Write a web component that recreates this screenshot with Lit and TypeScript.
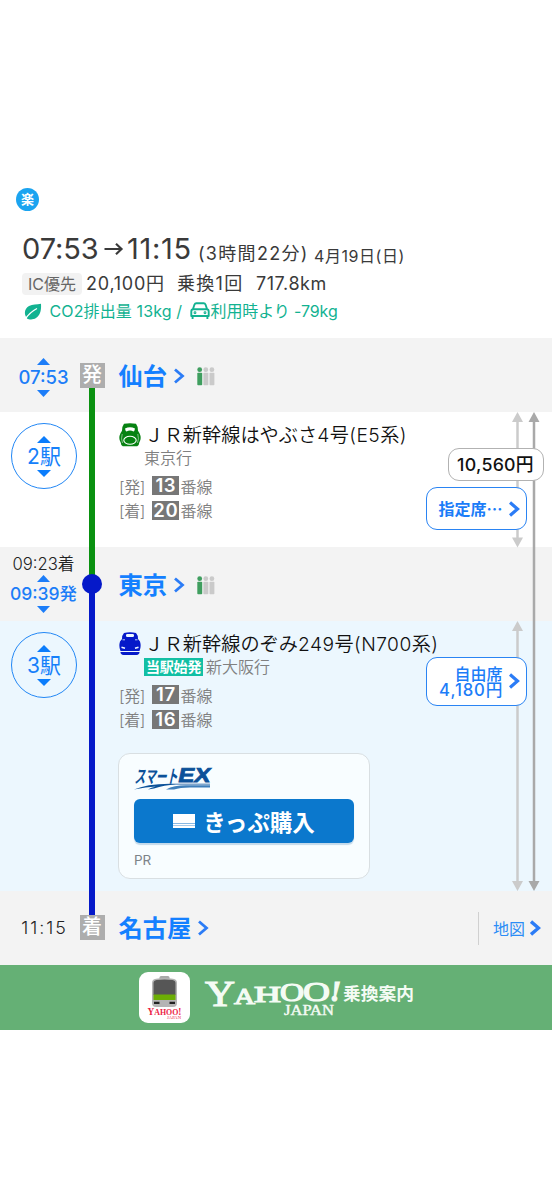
import { LitElement, html, svg, css, nothing } from "lit";
import { customElement, property } from "lit/decorators.js";

const FONT = css`Inter, "Noto Sans CJK JP", sans-serif`;

@customElement("chevron-icon")
class ChevronIcon extends LitElement {
  @property({ type: Number }) weight = 2.8;
  static styles = css`
    :host { display: inline-flex; }
    svg { display: block; }
    path { fill: none; stroke: #2b7cf6; }
  `;
  render() {
    return html`<svg width="11" height="16" viewBox="0 0 11 16">
      <path d="M1 1.5 L8.500 8 L1 14.5" stroke-width=${this.weight} />
    </svg>`;
  }
}

@customElement("trip-summary")
class TripSummary extends LitElement {
  static styles = css`
    :host {
      display: flex; flex-direction: column; align-items: flex-start;
      box-sizing: border-box; height: 338px; padding: 188px 0 0 16px;
      font-family: Inter, "Noto Sans CJK JP", sans-serif; color: #3a3a3a;
    }
    .easy {
      display: flex; align-items: center; justify-content: center;
      width: 23px; height: 23px; border-radius: 50%; background: #1ba4f0;
      color: #fff; font-size: 13px; font-weight: 700; line-height: 23px;
    }
    .line { display: flex; align-items: center; white-space: nowrap; }
    .time { margin: 20px 0 0 6px; height: 36px; line-height: 36px; }
    .clock { font-size: 29px; font-weight: 400; letter-spacing: -0.1px; width: 82px; }
    .clock.to { width: 71px; letter-spacing: 0.7px; }
    .arrow { width: 23px; height: 14px; flex: none; }
    .dur { font-size: 18px; padding-top: 9px; width: 116px; letter-spacing: 1.3px; }
    .date { font-size: 16px; padding-top: 14px; letter-spacing: 0.55px; }
    .fare { margin: 6px 0 0 6px; height: 22px; line-height: 22px; font-size: 18px; }
    .ic {
      width: 60px; height: 22px; border-radius: 4px; background: #f2f2f2; color: #666;
      font-size: 16px; text-align: center; margin-right: 4px;
    }
    .yen { width: 91px; letter-spacing: 0.75px; }
    .chg { width: 79px; letter-spacing: 1.3px; }
    .km { letter-spacing: 0.55px; }
    .eco { margin: 5px 0 0 8px; height: 22px; line-height: 22px; font-size: 16px; color: #12b291; }
    .leaf { width: 18px; height: 17px; margin-right: 7.500px; }
    .co { width: 140px; letter-spacing: 0.12px; }
    .car { width: 20px; height: 18px; margin-right: 1px; }
    .minus { letter-spacing: -0.1px; }
  `;
  render() {
    return html`
      <div class="easy">楽</div>
      <div class="line time">
        <span class="clock">07:53</span>
        <svg class="arrow" viewBox="0 0 23 14"><path d="M.5 7H17.500M12 1.800 17.500 7l-5.500 5.200" fill="none" stroke="#3a3a3a" stroke-width="2.200"/></svg>
        <span class="clock to">11:15</span>
        <span class="dur">(3時間22分)</span>
        <span class="date">4月19日(日)</span>
      </div>
      <div class="line fare">
        <span class="ic">IC優先</span><span class="yen">20,100円</span>
        <span class="chg">乗換1回</span><span class="km">717.8km</span>
      </div>
      <div class="line eco">
        <svg class="leaf" viewBox="0 0 18 17">
          <path d="M17 .8C17.400 7 16.500 12 12 15c-3 2-7 1.700-9 .4C-.5 11 .5 5.500 5 3 8.500 1.200 13 1.500 17 .8z" fill="#12b291"/>
          <path d="M.8 16.500C4 12 8 8 13 5.500" fill="none" stroke="#fff" stroke-width="1.300"/>
        </svg>
        <span class="co">CO2排出量 13kg /</span>
        <svg class="car" viewBox="0 0 20 18" fill="none" stroke="#12b291" stroke-width="1.900" stroke-linejoin="round">
          <path d="M2.800 7.500 4.500 2.500Q5 1.300 6.300 1.300H13.700Q15 1.300 15.500 2.500L17.200 7.500M1.300 14V9.500Q1.300 7.300 3.500 7.300H16.500Q18.700 7.300 18.700 9.500V14ZM2.600 14V17M17.400 14V17"/>
          <circle cx="5" cy="10.700" r=".5"/><circle cx="15" cy="10.700" r=".5"/>
        </svg>
        <span class="minus">利用時より -79kg</span>
      </div>`;
  }
}

@customElement("station-row")
class StationRow extends LitElement {
  @property() name = "";
  @property() kind = "";
  static styles = css`
    :host {
      display: grid; grid-template-columns: 79px 26px 1fr auto; height: 74px;
      background: #f3f3f3; font-family: ${FONT};
    }
    .times {
      display: flex; flex-direction: column; align-items: center; padding-left: 8px; box-sizing: border-box;
      height: 74px; justify-content: center; padding-top: 4px; white-space: nowrap;
    }
    .times.mid { justify-content: flex-start; padding-top: 6px; }
    .times.end { padding-top: 0; }
    .arr { font-size: 16.700px; line-height: 22px; color: #222; height: 22px; font-weight: 350; }
    .dep { font-size: 18.500px; line-height: 21px; height: 21px; color: #1c7df8; font-weight: 500; letter-spacing: 0; }
    .mid .dep { font-size: 17.500px; }
    .plain { font-size: 17.800px; line-height: 20px; color: #222; letter-spacing: 2px; font-weight: 350; text-indent: 2px; }
    .tri { width: 13px; height: 7px; display: block; fill: #1c7df8; margin: 2px 0; }
    .mid .tri { margin: 0; }
    .mid .dep { line-height: 24px; height: 24px; }
    .rail { display: flex; flex-direction: column; align-items: center; height: 74px; box-sizing: border-box; }
    .badge {
      width: 25px; height: 25px; background: #adadad; color: #fff; flex: none;
      font-size: 20px; line-height: 24px; text-align: center; font-weight: 500; overflow: hidden;
    }
    .rail.start { padding-top: 25px; }
    .g { background: #0a9110; width: 6px; flex: 1; }
    .b { background: #0519c9; width: 6px; flex: 1; }
    .dot { width: 20px; height: 20px; border-radius: 50%; background: #0519c9; margin: -10px 0; z-index: 1; flex: none; }
    .end .b { flex: none; height: 24px; }
    .name { display: flex; align-items: center; padding: 2px 0 0 13.500px; color: #1480ff; }
    .name.end { padding-top: 0; }
    .name b { font-size: 24.300px; font-weight: 700; line-height: 30px; margin-right: 7px; }
    .crowd { margin-left: 12px; width: 18px; height: 19px; }
    .map {
      align-self: center; display: flex; align-items: center; height: 33px; gap: 5px; width: 59px;
      border-left: 1px solid #d0d0d0; padding: 0 0 0 14px; font-size: 16px; color: #2b8cf6; 
    }
  `;
  times() {
    const up = html`<svg class="tri" viewBox="0 0 13 7"><path d="M0 7 6.500 0 13 7z"/></svg>`;
    const down = html`<svg class="tri" viewBox="0 0 13 7"><path d="M0 0 6.500 7 13 0z"/></svg>`;
    if (this.kind === "start") return html`${up}<span class="dep">07:53</span>${down}`;
    if (this.kind === "mid")
      return html`<span class="arr">09:23着</span>${up}<span class="dep">09:39発</span>${down}`;
    return html`<span class="plain">11:15</span>`;
  }
  rail() {
    if (this.kind === "start") return html`<span class="badge">発</span><i class="g"></i>`;
    if (this.kind === "mid") return html`<i class="g"></i><i class="dot"></i><i class="b"></i>`;
    return html`<i class="b"></i><span class="badge">着</span>`;
  }
  render() {
    return html`
      <div class="times ${this.kind}">${this.times()}</div>
      <div class="rail ${this.kind}">${this.rail()}</div>
      <div class="name ${this.kind}">
        <b>${this.name}</b><chevron-icon></chevron-icon>
        ${this.kind === "end" ? nothing : html`<svg class="crowd" viewBox="0 0 18 19">
          ${[0, 1, 2].map((i) => svg`<g fill=${i ? "#cacaca" : "#3f9e5f"}>
            <circle cx=${2.7 + i * 6.1} cy="2.700" r="2.400"/><rect x=${0.3 + i * 6.1} y="5.800" width="4.900" height="12.500" rx="0.800"/></g>`)}
        </svg>`}
      </div>
      ${this.kind === "end" ? html`<div class="map">地図<chevron-icon weight="3.4"></chevron-icon></div>` : nothing}`;
  }
}

@customElement("ride-row")
class RideRow extends LitElement {
  @property() color = "";
  @property() stops = "";
  @property() title = "";
  @property() bound = "";
  @property() from = "";
  @property() to = "";
  @property({ type: Boolean }) origin = false;
  static styles = css`
    :host { display: grid; grid-template-columns: 88px 8px 1fr; font-family: ${FONT}; }
    .stops {
      display: flex; flex-direction: column; align-items: center; justify-content: center; box-sizing: border-box;
      width: 66px; height: 66px; border: 1.500px solid #2287f5; border-radius: 50%;
      margin: 11px 0 0 11px; color: #1580fa; font-size: 21px; line-height: 27px; font-weight: 400;
    }
    .stops svg { width: 14px; height: 7px; fill: #0b7dfc; display: block; }
    .rail { width: 6px; margin-left: 1px; background: #0a9110; }
    .blue { background: #0519c9; }
    .body { padding: 11px 0 0 23px; white-space: nowrap; color: #808080; font-size: 16px; font-weight: 350; }
    .head { display: flex; height: 25px; line-height: 25px; font-size: 19.200px; color: #111; }
    .train { width: 22px; height: 24px; margin-right: 3.500px; flex: none; }
    .lat { letter-spacing: 0.45px; }
    .bound { display: flex; align-items: center; height: 20px; line-height: 20px; margin-left: 25px; gap: 3px; }
    .tag { background: #12bfa4; color: #fff; font-weight: 700; font-size: 14px; line-height: 18px; height: 18px; padding: 0 2px; width: 55px; text-align: center; letter-spacing: -0.2px; }
    .track { display: flex; align-items: center; height: 24.500px; }
    .mark { width: 26px; letter-spacing: -0.4px; }
    .track:nth-of-type(3) { margin-top: 5.500px; }
    .no {
      background: #777; color: #fff; font-weight: 600; font-size: 18.500px; width: 27px; height: 19px; line-height: 19.500px;
      text-align: center; margin: 0 1.500px 0 7px; letter-spacing: 0.6px; text-indent: 0.6px;
    }
  `;
  train() {
    return this.origin
      ? html`<svg class="train" viewBox="0 0 22 24">
          <path d="M5 1Q11-.5 17 1q2 2 2 6l2 2.500q1.500 5-.5 9.500H1.500q-2-4.500-.5-9.500L3 7Q3 3 5 1z" fill="#0519c9"/>
          <rect x="7" y="2" width="8" height="3" rx="1.200" fill="#eef8ff"/>
          <path d="M3.500 7.800h2.500M16 7.800h2.500" stroke="#eef8ff" stroke-width=".8"/>
          <path d="M2.500 15.300l3.500 1M19.500 15.300l-3.500 1" stroke="#eef8ff" stroke-width="1.600"/>
          <path d="M1 19h20v1H1z" fill="#eef8ff"/>
          <path d="M1.500 20h19q0 2.500-3 3h-13q-3-.5-3-3z" fill="#0519c9"/></svg>`
      : html`<svg class="train" viewBox="0 0 22 24">
          <path d="M5 .8Q11-.5 17 .8q2 2.500 2 7l1.500 2.500q2.500 5-.3 9.500-.2 3.200-2 3.500H3.800q-1.800-.3-2-3.500-2.800-4.500-.3-9.500L3 7.800q0-4.500 2-7z" fill="#078212"/>
          <path d="M6 5.500Q11 3.200 16 5.500 15.500 8.300 14.500 8.600 11 6.500 7.500 8.600 6.500 8.300 6 5.500z" fill="#fff"/>
          <path d="M3.200 11Q1.800 16 3.500 20M18.800 11Q20.200 16 18.500 20" fill="none" stroke="#fff" stroke-width=".5"/>
          <ellipse cx="11" cy="17.300" rx="6.200" ry="4" fill="none" stroke="#fff" stroke-width="1.100"/></svg>`;
  }
  render() {
    const cut = this.title.search(/[0-9]/);
    return html`
      <div class="stops">
        <svg viewBox="0 0 14 7"><path d="M0 7 7 0 14 7z"/></svg>
        <span>${this.stops}</span>
        <svg viewBox="0 0 14 7"><path d="M0 0 7 7 14 0z"/></svg>
      </div>
      <div class="rail ${this.color}"></div>
      <div class="body">
        <div class="head">${this.train()}<span>${this.title.slice(0, cut)}</span><span class="lat">${this.title.slice(cut)}</span></div>
        <div class="bound">${this.origin ? html`<span class="tag">当駅始発</span>` : nothing}<span>${this.bound}</span></div>
        <div class="track"><span class="mark">[発]</span><span class="no">${this.from}</span>番線</div>
        <div class="track"><span class="mark">[着]</span><span class="no">${this.to}</span>番線</div>
        <slot></slot>
      </div>`;
  }
}

@customElement("ticket-card")
class TicketCard extends LitElement {
  static styles = css`
    :host {
      display: flex; flex-direction: column; align-items: flex-start; box-sizing: border-box;
      width: 252px; height: 126px; margin: 21.500px 0 0 -1px; padding: 11px 15px 0; border: 1.500px solid #d9dfe2; border-radius: 12px;
      background: #f8fdff; font-family: "Noto Sans CJK JP", sans-serif;
    }
    .logo { width: 80px; height: 26px; display: block; overflow: visible; }
    .buy {
      display: flex; align-items: center; justify-content: center; gap: 8px; width: 220px; height: 44px; margin-top: 8px;
      border-radius: 6px; background: #0b78cd; color: #fff; box-shadow: 0 2px 1px #c3d9ea;
      font-size: 22.500px; font-weight: 700; line-height: 44px;
    }
    .ticket { width: 22px; height: 14px; }
    .pr { font: 400 13.500px/18px Inter, sans-serif; color: #7d8388; margin-top: 8px; }
  `;
  render() {
    return html`
      <svg class="logo" viewBox="0 0 80 26">
        <g fill="#0b5199" font-family="'Noto Sans CJK JP', sans-serif" font-weight="700" transform="skewX(-12)">
          <text x="4" y="17.500" font-size="18" textLength="43" lengthAdjust="spacingAndGlyphs">スマート</text>
          <text x="47" y="17" font-family="'Liberation Sans', sans-serif" font-size="20" textLength="32" lengthAdjust="spacingAndGlyphs" stroke="#0b5199" stroke-width=".8">EX</text>
        </g>
        <path d="M0 24.500Q12 19 36 18.700H76V19.500H42Q30 20 20 23.500L14 24.500Q17 22.700 22 21.500 12 22 0 24.500z" fill="#0b5199"/>
        <path d="M32 24.500Q40 20.300 52 20.300H76V22.500H56Q46 22.500 40 24.500z" fill="#3f7fba"/>
      </svg>
      <div class="buy">
        <svg class="ticket" viewBox="0 0 22 14"><path d="M0 0h22v14H0z" fill="#fff"/><path d="M0 9h22v1H0zM0 11h22v.7H0z" fill="#88b8e2"/></svg>
        <span>きっぷ購入</span>
      </div>
      <div class="pr">PR</div>`;
  }
}

@customElement("fare-overlay")
class FareOverlay extends LitElement {
  static styles = css`
    :host { position: absolute; inset: 0; font-family: ${FONT}; }
    .spans { position: absolute; right: 0; top: 0; width: 60px; height: 627px; }
    .pill {
      position: absolute; box-sizing: border-box; background: #fff; display: flex; align-items: center;
      border-radius: 11px; white-space: nowrap;
    }
    .total { left: 447.500px; top: 110px; width: 96px; height: 33px; border: 1.500px solid #b2b2b2; justify-content: center; font-size: 17.800px; line-height: 28px; color: #111; font-weight: 500; letter-spacing: 0.25px; }
    .seat { left: 426px; width: 101px; border: 1.500px solid #2a84f3; color: #1c7df8; font-size: 16px; font-weight: 500; justify-content: flex-end; padding-right: 6.500px; gap: 6px; line-height: 16px; text-align: right; }
    .jp { font-family: "Noto Sans CJK JP", sans-serif; font-weight: 700; padding-bottom: 2px; }
    .res { top: 149px; height: 43px; }
    .free { top: 318.500px; height: 49px; }
    .free div { display: flex; flex-direction: column; align-items: flex-end; padding-top: 1px; }
    .num { font-size: 16.700px; letter-spacing: 0.9px; margin-right: -0.900px; }
  `;
  render() {
    const span = (x: number, a: number, b: number, c: string, w: number) => svg`
      <path d="M${x} ${a + 8}V${b - 8}" stroke=${c} stroke-width=${w}/>
      <path d="M${x - 5.5} ${a + 10} ${x} ${a}l5.500 10zM${x - 5.5} ${b - 10} ${x} ${b}l5.500-10z" fill=${c}/>`;
    return html`
      <svg class="spans" viewBox="0 0 60 627">
        ${span(25.5, 74, 209.5, "#cbcbcb", 2.5)}${span(25.5, 283, 553, "#cbcbcb", 2.5)}${span(42, 74, 553, "#a9a9a9", 2.5)}
      </svg>
      <div class="pill total">10,560円</div>
      <div class="pill seat res"><span class="jp">指定席⋯</span><chevron-icon weight="3.2"></chevron-icon></div>
      <div class="pill seat free"><div><span>自由席</span><span class="num">4,180円</span></div><chevron-icon weight="3.2"></chevron-icon></div>`;
  }
}

@customElement("app-banner")
class AppBanner extends LitElement {
  static styles = css`
    :host { display: flex; align-items: center; height: 66px; background: #65b075; padding-left: 139px; margin-top: -1px; }
    .app { width: 51px; height: 51px; display: block; margin-right: 14px; }
    .brand { width: 214px; height: 46px; display: block; overflow: visible; }
  `;
  render() {
    return html`
      <svg class="app" viewBox="0 0 51 51">
        <rect width="51" height="51" rx="9" fill="#fff"/>
        <rect x="20.500" y="4" width="10" height="4" rx="1.500" fill="#a9a9a9"/>
        <path d="M13 11q0-4 4-4.300 8.500-1.200 17 0 4 .3 4 4.300v20q0 4-4 4H17q-4 0-4-4z" fill="#b4b4b4"/>
        <path d="M14.500 11q0-2.500 3-3 8-1 16 0 3 .5 3 3v12h-22z" fill="#565656"/>
        <path d="M14.500 22.500h22v5.500h-22z" fill="#6cae05"/>
        <path d="M15 29.800h5.500v2.200H15zM30.500 29.800H36v2.200h-5.500z" fill="#222"/>
        <g fill="#ec1d44" font-family="'Liberation Serif', serif" font-weight="700">
          <text x="8.500" y="43" font-size="9.500" textLength="34" lengthAdjust="spacingAndGlyphs">Y<tspan font-size="8">AHOO</tspan>!</text>
          <text x="28" y="46.500" font-size="4" font-weight="400" textLength="14" lengthAdjust="spacingAndGlyphs">JAPAN</text>
        </g>
      </svg>
      <svg class="brand" viewBox="0 0 214 46" fill="#f4fbf4">
        <g font-family="'Liberation Serif', serif" stroke="#f4fbf4" stroke-width="1.200">
          <text x="1" y="32" font-size="36" textLength="30" lengthAdjust="spacingAndGlyphs">Y</text>
          <text x="30" y="30" font-size="24" textLength="21" lengthAdjust="spacingAndGlyphs">A</text>
          <text x="50" y="27.500" font-size="24" textLength="27" lengthAdjust="spacingAndGlyphs">H</text>
          <text x="76" y="27" font-size="25.500" textLength="24" lengthAdjust="spacingAndGlyphs">O</text>
          <text x="99" y="27" font-size="28" textLength="27" lengthAdjust="spacingAndGlyphs">O</text>
          <text x="126" y="27" font-size="29" font-weight="700" font-style="italic" textLength="11" lengthAdjust="spacingAndGlyphs">!</text>
          <text x="80" y="40.500" font-size="14" stroke-width=".4" textLength="50" lengthAdjust="spacingAndGlyphs">JAPAN</text>
        </g>
        <text x="139" y="25.500" font-family="'Noto Sans CJK JP', sans-serif" font-size="17.500" font-weight="700" textLength="71" lengthAdjust="spacingAndGlyphs">乗換案内</text>
      </svg>`;
  }
}

@customElement("app-root")
class AppRoot extends LitElement {
  static styles = css`
    :host { display: block; height: 1200px; background: #fff; overflow: hidden; }
    .route { position: relative; }
    .first { height: 135px; }
    .second { height: 270px; background: #ecf7fe; }
  `;
  render() {
    return html`
      <trip-summary></trip-summary>
      <div class="route">
        <station-row name="仙台" kind="start"></station-row>
        <ride-row class="first" stops="2駅" title="ＪＲ新幹線はやぶさ4号(E5系)" bound="東京行" from="13" to="20"></ride-row>
        <station-row name="東京" kind="mid"></station-row>
        <ride-row class="second" color="blue" origin stops="3駅" title="ＪＲ新幹線のぞみ249号(N700系)" bound="新大阪行" from="17" to="16">
          <ticket-card></ticket-card>
        </ride-row>
        <station-row name="名古屋" kind="end"></station-row>
        <fare-overlay></fare-overlay>
      </div>
      <app-banner></app-banner>`;
  }
}
